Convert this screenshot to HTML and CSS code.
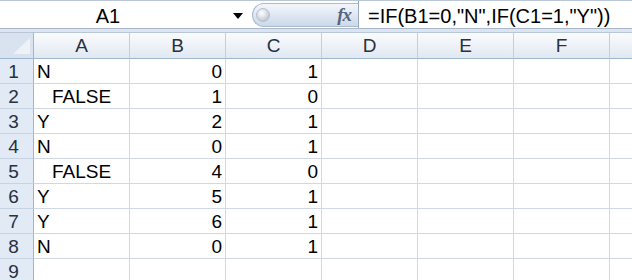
FILE: index.html
```html
<!DOCTYPE html>
<html>
<head>
<meta charset="utf-8">
<link rel="stylesheet" href="styles.css">
</head>
<body>
<div class="fbar">
  <div class="namebox"><span class="ref">A1</span><span class="caret"></span></div>
  <div class="pill"><span class="ball"></span><span class="fx">fx</span></div>
  <div class="formula">=IF(B1=0,"N",IF(C1=1,"Y"))</div>
</div>
<div class="band"></div>
<div class="sheet">
  <div class="corner"><span class="tri"></span></div>
  <div class="ch">A</div><div class="ch">B</div><div class="ch">C</div><div class="ch">D</div><div class="ch">E</div><div class="ch">F</div><div class="ch last"></div>

  <div class="rh">1</div><div class="c">N</div><div class="c num">0</div><div class="c num">1</div><div class="c"></div><div class="c"></div><div class="c"></div><div class="c last"></div>
  <div class="rh">2</div><div class="c ctr">FALSE</div><div class="c num">1</div><div class="c num">0</div><div class="c"></div><div class="c"></div><div class="c"></div><div class="c last"></div>
  <div class="rh">3</div><div class="c">Y</div><div class="c num">2</div><div class="c num">1</div><div class="c"></div><div class="c"></div><div class="c"></div><div class="c last"></div>
  <div class="rh">4</div><div class="c">N</div><div class="c num">0</div><div class="c num">1</div><div class="c"></div><div class="c"></div><div class="c"></div><div class="c last"></div>
  <div class="rh">5</div><div class="c ctr">FALSE</div><div class="c num">4</div><div class="c num">0</div><div class="c"></div><div class="c"></div><div class="c"></div><div class="c last"></div>
  <div class="rh">6</div><div class="c">Y</div><div class="c num">5</div><div class="c num">1</div><div class="c"></div><div class="c"></div><div class="c"></div><div class="c last"></div>
  <div class="rh">7</div><div class="c">Y</div><div class="c num">6</div><div class="c num">1</div><div class="c"></div><div class="c"></div><div class="c"></div><div class="c last"></div>
  <div class="rh">8</div><div class="c">N</div><div class="c num">0</div><div class="c num">1</div><div class="c"></div><div class="c"></div><div class="c"></div><div class="c last"></div>
  <div class="rh">9</div><div class="c"></div><div class="c"></div><div class="c"></div><div class="c"></div><div class="c"></div><div class="c"></div><div class="c last"></div>
</div>
</body>
</html>
```
FILE: styles.css
```css
* { box-sizing: border-box; }
html, body {
  margin: 0;
  padding: 0;
  width: 632px;
  height: 280px;
  overflow: hidden;
  background: #fff;
  font-family: "Liberation Sans", Arial, sans-serif;
}
.fbar {
  display: flex;
  height: 29px;
  border-top: 1px solid #b9c6d8;
  border-bottom: 1px solid #a9b8cc;
  background: #fff;
}
.namebox {
  width: 252px;
  display: flex;
  align-items: flex-start;
  position: relative;
}
.ref {
  width: 216px;
  text-align: center;
  font-size: 20px;
  line-height: 24px;
  padding-top: 3px;
  color: #000;
}
.caret {
  margin-left: 17px;
  margin-top: 12px;
  width: 0;
  height: 0;
  border-left: 5px solid transparent;
  border-right: 5px solid transparent;
  border-top: 6px solid #000;
}
.pill {
  width: 106px;
  height: 24px;
  margin-top: 2px;
  border: 1px solid #a8b9d0;
  border-right: none;
  border-radius: 12px 0 0 12px;
  background: linear-gradient(#f4f7fb, #dce6f2 55%, #cdd9e9);
  display: flex;
  align-items: center;
  justify-content: space-between;
  padding: 0 7px 0 3px;
}
.ball {
  width: 14px;
  height: 14px;
  border-radius: 50%;
  background: radial-gradient(circle at 40% 35%, #ffffff, #d9dee6 45%, #a9b2bf);
  border: 1px solid #b7c0cc;
}
.fx {
  font-family: "Liberation Serif", serif;
  font-style: italic;
  font-weight: bold;
  font-size: 19px;
  color: #56667e;
  letter-spacing: -1px;
  line-height: 20px;
}
.formula {
  flex: 1;
  border-left: 1px solid #9aaac0;
  padding-left: 9px;
  padding-top: 4px;
  font-size: 20px;
  line-height: 22px;
  color: #000;
  white-space: nowrap;
}
.band {
  height: 3px;
  background: #dbe4ef;
}
.sheet {
  display: grid;
  grid-template-columns: 34px repeat(6, 96px) 1fr;
  grid-template-rows: 27px repeat(9, 25px);
}
.corner {
  background: #d9e3f0;
  border-right: 1px solid #9eb6ce;
  border-bottom: 1px solid #9eb6ce;
  border-top: 1px solid #b8c6d8;
  position: relative;
}
.tri {
  position: absolute;
  right: 3px;
  bottom: 4px;
  width: 17px;
  height: 16px;
  background: #eef1f5;
  clip-path: polygon(100% 0, 100% 100%, 0 100%);
}
.ch {
  background: linear-gradient(#f9fbfd, #eef2f8 50%, #e1e8f1);
  border-right: 1px solid #c2cedd;
  border-bottom: 1px solid #9eb6ce;
  border-top: 1px solid #b8c6d8;
  text-align: center;
  font-size: 19px;
  line-height: 22px;
  padding-top: 2px;
  color: #27313f;
}
.rh {
  background: #e2eaf5;
  border-right: 1px solid #9eb6ce;
  border-bottom: 1px solid #c6d3e4;
  text-align: center;
  padding-right: 6px;
  font-size: 19px;
  line-height: 22px;
  padding-top: 2px;
  color: #27313f;
}
.c {
  border-right: 1px solid #d0d7e5;
  border-bottom: 1px solid #d0d7e5;
  font-size: 19px;
  line-height: 22px;
  padding: 2px 3px 0 3px;
  color: #000;
  white-space: nowrap;
}
.last { border-right: none; }
.num { text-align: right; }
.ctr { text-align: center; }
```
